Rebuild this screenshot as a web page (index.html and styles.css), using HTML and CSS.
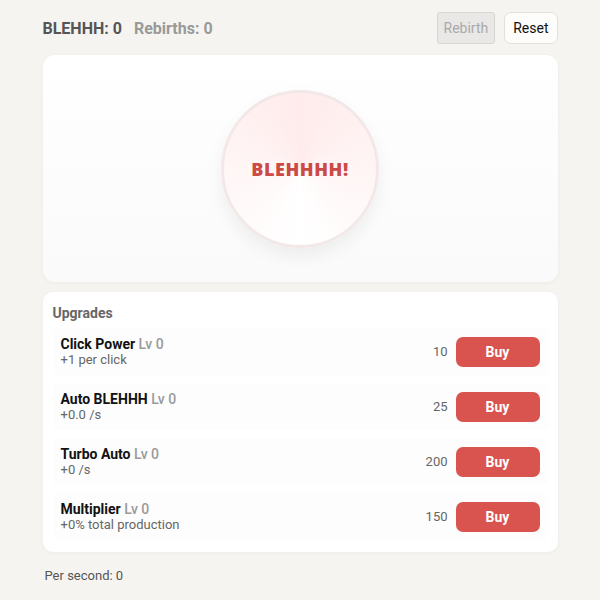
FILE: index.html
```html
<!DOCTYPE html>
<html>
<head>
<meta charset="utf-8">
<link rel="stylesheet" href="styles.css">
</head>
<body>
<div class="app">
  <header class="top">
    <div class="stats">
      <span class="stat-main">BLEHHH: 0</span>
      <span class="stat-sub">Rebirths: 0</span>
    </div>
    <div class="actions">
      <button class="btn btn-disabled" disabled>Rebirth</button>
      <button class="btn">Reset</button>
    </div>
  </header>
  <section class="stage">
    <button class="bleh">BLEHHHH!</button>
  </section>
  <section class="upgrades">
    <h2 class="up-title">Upgrades</h2>
    <div class="row">
      <div class="info"><div class="name">Click Power <span class="lv">Lv 0</span></div><div class="desc">+1 per click</div></div>
      <div class="price">10</div><button class="buy">Buy</button>
    </div>
    <div class="row">
      <div class="info"><div class="name">Auto BLEHHH <span class="lv">Lv 0</span></div><div class="desc">+0.0 /s</div></div>
      <div class="price">25</div><button class="buy">Buy</button>
    </div>
    <div class="row">
      <div class="info"><div class="name">Turbo Auto <span class="lv">Lv 0</span></div><div class="desc">+0 /s</div></div>
      <div class="price">200</div><button class="buy">Buy</button>
    </div>
    <div class="row">
      <div class="info"><div class="name">Multiplier <span class="lv">Lv 0</span></div><div class="desc">+0% total production</div></div>
      <div class="price">150</div><button class="buy">Buy</button>
    </div>
  </section>
  <div class="footer">Per second: 0</div>
</div>
</body>
</html>
```
FILE: styles.css
```css
html, body { margin: 0; padding: 0; }
body {
  background: #f5f4f1;
  font-family: Roboto, "Liberation Sans", sans-serif;
  color: #222;
}
.app {
  width: 515px;
  margin: 0 auto;
  padding-top: 12px;
}
.top {
  display: flex;
  align-items: center;
  justify-content: space-between;
  height: 32px;
}
.stats { display: flex; gap: 12px; font-size: 16px; font-weight: 700; }
.stat-main { color: #555; }
.stat-sub { color: #999; }
.actions { display: flex; gap: 9px; }
.btn {
  font-family: Roboto, "Liberation Sans", sans-serif;
  font-size: 14px;
  height: 32px;
  padding: 0 8px;
  border-radius: 7px;
  border: 1px solid #e2e0dc;
  background: #fdfdfc;
  color: #111;
}
.btn-disabled {
  background: #e9e8e6;
  color: #aaa;
  border-color: #d8d6d2;
  border-radius: 3px;
  padding: 0 6px;
}
.stage {
  margin-top: 11px;
  height: 227px;
  border-radius: 12px;
  background: linear-gradient(180deg, #ffffff 0%, #fafafa 100%);
  box-shadow: 0 1px 4px rgba(0,0,0,0.04);
  display: flex;
  align-items: center;
  justify-content: center;
}
.bleh {
  width: 158px;
  height: 158px;
  border-radius: 50%;
  border: 3px solid #f3e8e8;
  background: conic-gradient(from 0deg, #ffebeb 0deg, #fff5f5 90deg, #ffffff 180deg, #fff6f6 270deg, #ffebeb 360deg);
  box-shadow: 0 8px 18px rgba(0,0,0,0.06);
  font-family: "Open Sans", "DejaVu Sans", sans-serif;
  font-weight: 800;
  font-size: 18px;
  letter-spacing: 0.6px;
  color: #cc4a45;
  padding: 0;
}
.upgrades {
  margin-top: 10px;
  background: #fff;
  border-radius: 10px;
  padding: 13px 10px 12px 10px;
  box-shadow: 0 1px 4px rgba(0,0,0,0.04);
}
.up-title {
  margin: 0 0 7px 0;
  font-size: 14px;
  font-weight: 700;
  color: #666;
}
.row {
  display: flex;
  align-items: center;
  height: 47px;
  padding: 0 8px 0 8px;
  background: #fdfdfd;
  border-radius: 6px;
  margin-bottom: 8px;
}
.row:last-child { margin-bottom: 0; }
.info { flex: 1; }
.name { font-size: 14px; font-weight: 700; color: #111; line-height: 16px; }
.lv { color: #9a9a9a; font-weight: 500; }
.desc { font-size: 13px; color: #666; line-height: 16px; }
.price { font-size: 13px; color: #666; margin-right: 8px; }
.buy {
  width: 84px;
  height: 30px;
  border: none;
  border-radius: 7px;
  background: #d9534f;
  color: #fff;
  font-family: Roboto, "Liberation Sans", sans-serif;
  font-size: 14px;
  font-weight: 700;
}
.footer {
  margin-top: 16px;
  padding-left: 2px;
  font-size: 13px;
  color: #555;
}
```
